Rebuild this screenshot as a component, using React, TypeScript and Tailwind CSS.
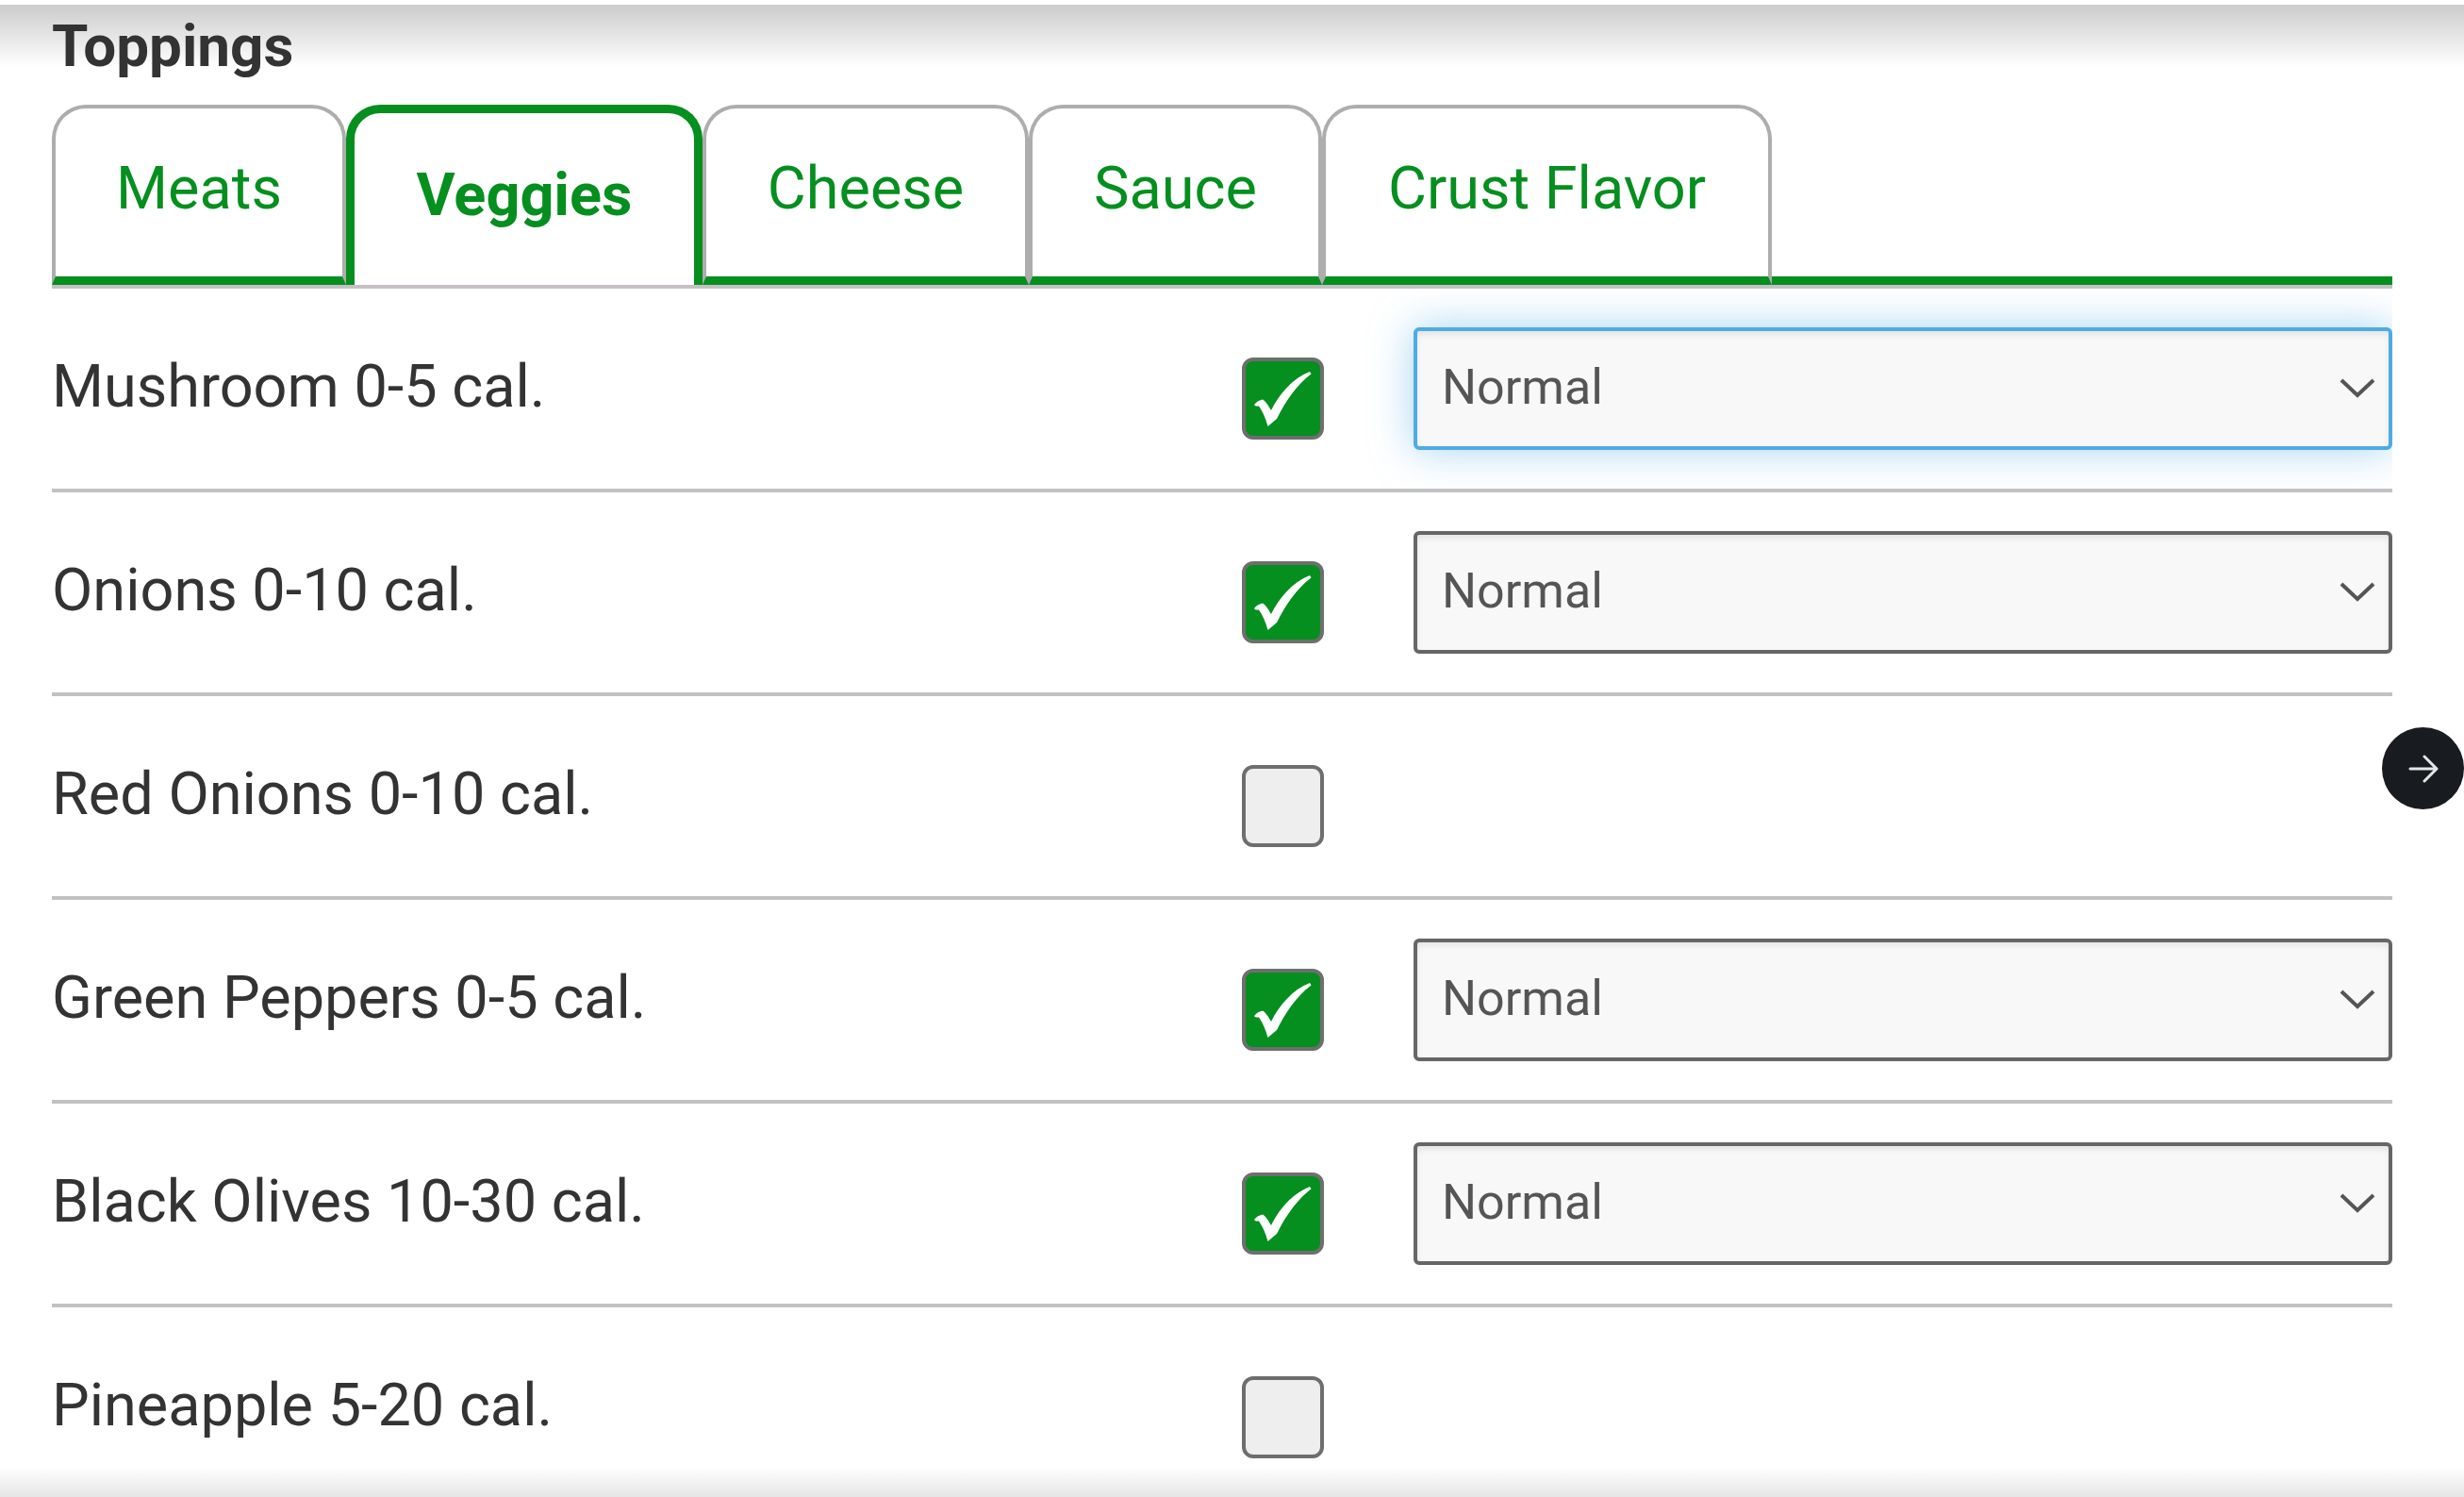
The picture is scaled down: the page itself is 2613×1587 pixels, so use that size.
import { useState } from 'react'
import clsx from 'clsx'

const tabs = [
  { name: 'Meats', width: 'w-[312px]' },
  { name: 'Veggies', width: 'w-[378px]' },
  { name: 'Cheese', width: 'w-[346px]' },
  { name: 'Sauce', width: 'w-[311px]' },
  { name: 'Crust Flavor', width: 'w-[477px]' },
]

const veggies = [
  { id: 'mushroom', label: 'Mushroom 0-5 cal.', checked: true },
  { id: 'onions', label: 'Onions 0-10 cal.', checked: true },
  { id: 'red-onions', label: 'Red Onions 0-10 cal.', checked: false },
  { id: 'green-peppers', label: 'Green Peppers 0-5 cal.', checked: true },
  { id: 'black-olives', label: 'Black Olives 10-30 cal.', checked: true },
  { id: 'pineapple', label: 'Pineapple 5-20 cal.', checked: false },
]

type Veggie = (typeof veggies)[number]

interface ToppingRowProps {
  item: Veggie
  active: boolean
  onToggle: () => void
  onFocus: () => void
}

function ToppingRow({ item, active, onToggle, onFocus }: ToppingRowProps) {
  return (
    <li className="grid h-[216px] grid-cols-[1262fr_182fr_1038fr] items-center overflow-hidden border-b-4 border-[#c2c2c2]">
      <label htmlFor={item.id} className="pb-1 text-[63px] leading-[72px] text-[#333333]">
        {item.label}
      </label>

      <div className="pt-5">
        <div className="relative size-[87px]">
          <input
            id={item.id}
            type="checkbox"
            checked={item.checked}
            onChange={onToggle}
            className="block size-full appearance-none rounded-xl border-4 border-[#6e6e6e] bg-[#eeeeee] checked:bg-[#048f1e]"
          />
          {item.checked && (
            <svg viewBox="0 0 87 87" className="pointer-events-none absolute inset-0 size-full" fill="#fff" aria-hidden="true">
              <path d="M13 50 C15 47 19 45 22 44.5 C25 46 28 51 31 56 C40 38 54 22 72 15 L73.5 17.5 C58 29 46 47 37 65 L27.5 73 C25 64 22 57 18 51.5 C16 51.5 14 52 13 50Z" />
            </svg>
          )}
        </div>
      </div>

      {item.checked && (
        <div className="relative">
          <select
            aria-label={`${item.label} amount`}
            onFocus={onFocus}
            className={clsx(
              'block h-[130px] w-full appearance-none rounded-md border-4 bg-[#f8f8f8] pr-24 pb-[2px] pl-[26px] text-[52px] text-[#555555] outline-none',
              active
                ? 'border-[#4dabe5] shadow-[0_0_44px_rgba(77,171,229,0.5),inset_0_4px_6px_rgba(0,0,0,0.08)]'
                : 'border-[#666666] shadow-[inset_0_4px_6px_rgba(0,0,0,0.08)]',
            )}
          >
            <option>Normal</option>
            <option>Light</option>
            <option>Extra</option>
          </select>
          <svg
            viewBox="0 0 40 24"
            className="pointer-events-none absolute top-1/2 right-[17px] h-6 w-10 -translate-y-1/2"
            fill="none"
            stroke="#555555"
            strokeWidth="4"
            aria-hidden="true"
          >
            <path d="M3 3 L20 19 L37 3" />
          </svg>
        </div>
      )}
    </li>
  )
}

export default function App() {
  const [tab, setTab] = useState('Veggies')
  const [items, setItems] = useState(veggies)
  const [focused, setFocused] = useState('mushroom')

  const toggle = (id: string) => {
    setItems(items.map((v) => (v.id === id ? { ...v, checked: !v.checked } : v)))
  }

  return (
    <div className="relative h-screen overflow-hidden bg-white pt-[5px] font-[Roboto,sans-serif]">
      <header className="h-[106px] bg-linear-to-b from-[#cccccc] to-white to-[66px] pt-2 pl-[55px]">
        <h1 className="text-[62px] leading-[72px] font-bold text-[#333333]">Toppings</h1>
      </header>

      <main className="pr-[76px] pl-[55px]">
        {/* Tabs */}
        <div role="tablist" className="flex h-[191px]">
          {tabs.map((t) => (
            <button
              key={t.name}
              type="button"
              role="tab"
              aria-selected={tab === t.name}
              onClick={() => setTab(t.name)}
              className={clsx(
                'shrink-0 rounded-t-[36px] pb-2 text-center text-[63px] leading-[72px] text-[#048f1e]',
                t.width,
                tab === t.name
                  ? 'border-x-[9px] border-t-[9px] border-[#048f1e] font-bold'
                  : 'border-4 border-b-[9px] border-[#adadad] border-b-[#048f1e]',
              )}
            >
              {t.name}
            </button>
          ))}
          <div className="flex-1 border-b-[9px] border-[#048f1e]" />
        </div>

        <ul className="border-t-4 border-[#c6c0c6]">
          {items.map((item) => (
            <ToppingRow
              key={item.id}
              item={item}
              active={focused === item.id}
              onToggle={() => toggle(item.id)}
              onFocus={() => setFocused(item.id)}
            />
          ))}
        </ul>
      </main>

      <div className="pointer-events-none absolute inset-x-0 bottom-0 h-8 bg-linear-to-b from-transparent to-black/10" />

      <button
        type="button"
        aria-label="Next"
        className="absolute top-[771px] right-0 flex size-[87px] items-center justify-center rounded-full bg-[#181c20]"
      >
        <svg viewBox="0 0 32 30" className="h-[30px] w-8" fill="none" stroke="#e6e6e6" strokeWidth="3" strokeLinecap="round" strokeLinejoin="round" aria-hidden="true">
          <path d="M2 15 H30 M17 2 L30 15 L17 28" />
        </svg>
      </button>
    </div>
  )
}
